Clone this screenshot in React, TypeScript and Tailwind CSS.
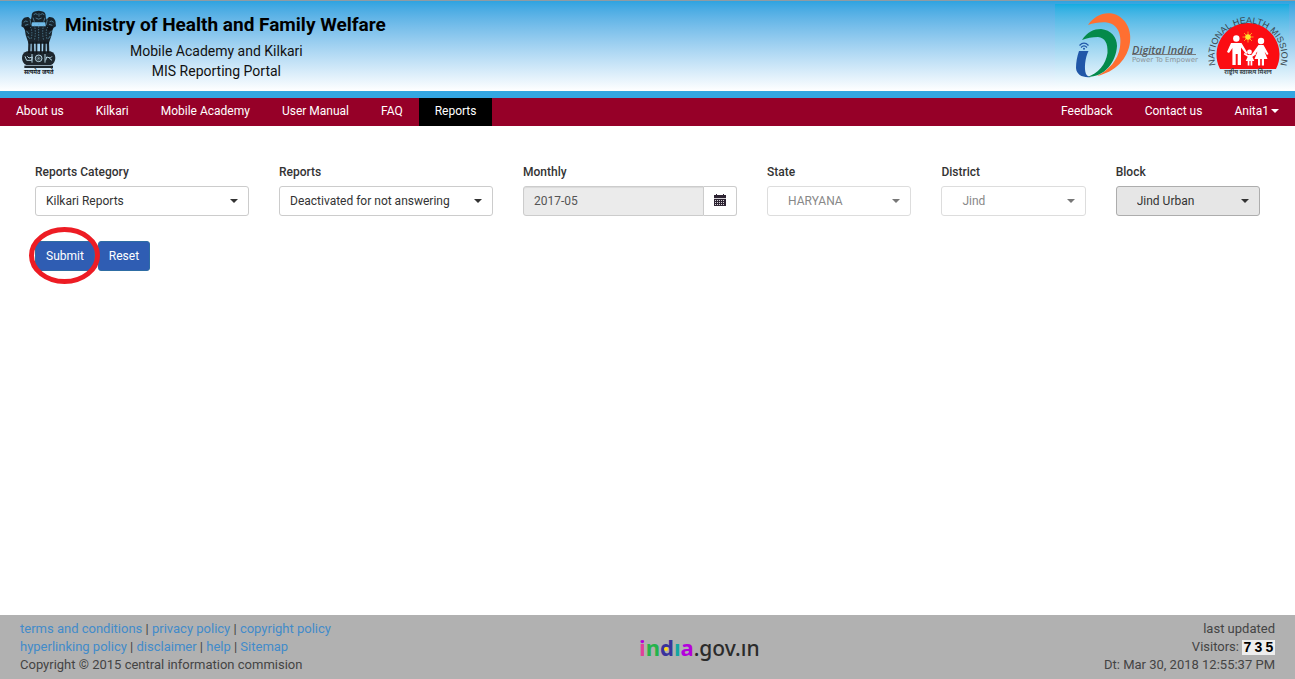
import React from 'react';

const ROBOTO = "font-['Roboto','Liberation_Sans',sans-serif]";

function Caret({ className = '' }: { className?: string }) {
  return (
    <svg aria-hidden="true" viewBox="0 0 8 4" className={`h-1 w-2 fill-current ${className}`}>
      <path d="M0 0h8L4 4z" />
    </svg>
  );
}

function Emblem() {
  return (
    <svg viewBox="0 0 150 225" className="h-[75px] w-[50px] shrink-0" aria-hidden="true">
      <g fill="#10171c" fillOpacity="0.92">
        <path d="M50 34C49 26 54 20 62 19q9-3 18 0c8 1 13 7 12 15l4 18H46z" />
        <path d="M20 56c-1-12 7-21 20-20l12 12-4 26-16 4-6-10-7-4z" />
        <path d="M122 56c1-12-7-21-20-20L90 48l4 26 16 4 6-10 7-4z" />
        <path d="M28 64h86l-4 26-9 26H41l-9-26z" />
        <path d="M40 110h7l-1 34h-7zM50 110h7l1 36h-8zM62 110h5v36h-5zM75 110h5v36h-5zM85 110h7v36h-8zM95 110h7l1 34h-7z" />
        <path d="M36 139h70c10 3 15 10 15 20s-5 18-13 21H34c-8-3-13-11-13-21s5-17 15-20z" />
        <path d="M28 182h86v7H28z" />
      </g>
      <g fill="none" stroke="#63a0be" strokeWidth="2">
        <path d="M56 29q6-6 12 0M76 29q6-6 12 0M62 39q9 7 18 0M54 38l4 12M90 38l-4 12M72 25v10" />
        <path d="M26 52q6-7 12-2M30 61l10-3M116 52q-6-7-12-2M112 61l-10-3M45 44l4 16M97 44l-4 16" />
        <path d="M46 66q8 14 2 36M58 60q6 22 0 46M71 56v50M86 60q-6 22 0 46M98 66q-8 14-2 36" strokeDasharray="4 4" />
        <path d="M34 77l8 10M110 77l-8 10M38 93l6 8M106 93l-6 8" />
      </g>
      <g fill="none" stroke="#b6d4e2" strokeWidth="3">
        <circle cx="71" cy="160" r="10" />
        <path d="M71 151v18M62 160h18M65 154l12 12M77 154l-12 12" strokeWidth="1" />
        <path d="M30 154l5 12h15l2-10-10 3-5-5M92 166l3-10 11 3 5-5M103 160l8 6M51 147v26M90 147v26" />
      </g>
      <text x="71" y="207" textAnchor="middle" fontSize="17" fontWeight="700" fill="#10171c" fontFamily="'Noto Sans','Noto Sans Devanagari','Lohit Devanagari',sans-serif">
        सत्यमेव जयते
      </text>
    </svg>
  );
}

function PartnerLogos() {
  return (
    <svg viewBox="0 0 234 87" className="h-[87px] w-[234px]" role="img" aria-label="Digital India and National Health Mission">
      <path fill="#ff6f31" d="M33 21C39 12 48 8 57 9.500C69 12 77 24 75 38C73 55 60 68 42 72C54 66 63 56 65 43C67 31 63 20 52 18.500C45 18 39 19 33 21Z" />
      <path fill="#048a4b" d="M27 36C32 28 39 25 46 25C56 26 62 33 62 42C61 58 50 73 32 73C43 70 51 60 52.500 49C53 39 50 34 43 33C37 33 32 34 27 36Z" />
      <path fill="#2157a8" d="M24 47H33.500C30 54 29 65 31 70C32 72 34 73 36 73C28 74 21.500 71 21 64C21 58 22 53 24 47Z" />
      <path fill="none" stroke="#2157a8" strokeWidth="1.200" d="M24.500 41.500Q29 37 33.500 41.500M26 43.500Q29 40.500 32 43.500" />
      <circle cx="29" cy="44.800" r="1" fill="#2157a8" />
      <text x="77" y="50" fontSize="11" fontStyle="italic" fontWeight="600" fill="#56595c" fontFamily="'Open Sans','Noto Sans',sans-serif">
        Digital India
      </text>
      <path d="M77 50.500H141" stroke="#77797b" strokeWidth="1" />
      <text x="77" y="58" fontSize="7" fill="#8e9498" fontFamily="'DejaVu Sans',sans-serif">
        Power To Empower
      </text>

      <path id="nhm-arc" d="M162.500 66A33.500 33 0 1 1 223.500 66" fill="none" />
      <path fill="#fb0d12" d="M165 65A31.500 31.500 0 1 1 221 65Z" />
      <text fontSize="9" fill="#39464d" fontFamily="'Liberation Sans',sans-serif">
        <textPath href="#nhm-arc" startOffset="50%" textAnchor="middle">
          NATIONAL HEALTH MISSION
        </textPath>
      </text>
      <path stroke="#ff9a1f" strokeWidth="1" d="M193 27.500v11M187.500 33h11M189 29l8 8M197 29l-8 8" />
      <circle cx="193" cy="33" r="2.800" fill="#ffe52e" />
      <g fill="#fff">
        <circle cx="181.300" cy="34.500" r="3.200" />
        <path d="M176 39h10.500l6 10-1.500 1-5-6.500V61h-3.300V50h-2V61h-3.300V44l-3.400 5-2-1z" />
        <circle cx="206" cy="37" r="3.200" />
        <path d="M203.500 41h5l5 9-1.500 1-2.500-3.500 3 7.500h-3.500v6.500h-2.200V55h-1.600v6.500h-2.200V55h-3.500l3-7.500-5 5-1.500-1z" />
        <circle cx="194.500" cy="48" r="2.400" />
        <path d="M193 51h3.500l4-2 .8 1.200-4 2.500 2 4.300h-2v4.500h-1.700V57h-1.200v4.500h-1.700V57h-2l2-4.300-4-2.500.8-1.200z" />
      </g>
      <text x="193" y="70" textAnchor="middle" fontSize="6" fontWeight="700" fill="#39464d" fontFamily="'Noto Sans','Noto Sans Devanagari','Lohit Devanagari',sans-serif">
        राष्ट्रीय स्वास्थ्य मिशन
      </text>
    </svg>
  );
}

function CalendarIcon() {
  return (
    <svg viewBox="0 0 12 12" className="h-3 w-3" aria-hidden="true">
      <path fill="#2e2433" d="M0 1h2V0h1v1h6V0h1v1h2v11H0z" />
      <path fill="#fff" d="M0 4h12v1H0zM1 6h1v1H1zM3 6h1v1H3zM5 6h1v1H5zM7 6h1v1H7zM9 6h1v1H9zM1 8h1v1H1zM3 8h1v1H3zM5 8h1v1H5zM7 8h1v1H7zM9 8h1v1H9zM1 10h1v1H1zM3 10h1v1H3zM5 10h1v1H5zM7 10h1v1H7zM9 10h1v1H9z" fillOpacity="0.8" />
    </svg>
  );
}

const LABEL = 'mb-[5px] block h-[18px] text-xs leading-[18px] font-medium text-[#333]';

type SelectFieldProps = { id: string; label: string; value: string; tone: string; disabled?: boolean };

function SelectField({ id, label, value, tone, disabled }: SelectFieldProps) {
  return (
    <div className="min-w-0 px-[15px]">
      <label htmlFor={id} className={LABEL}>{label}</label>
      <div className="relative">
        <select
          id={id}
          disabled={disabled}
          className={`block h-[30px] w-full appearance-none rounded-[3px] border pr-6 text-xs opacity-100 ${tone}`}
        >
          <option>{value}</option>
        </select>
        <Caret className={`pointer-events-none absolute top-[13px] right-[11px] ${disabled ? 'text-[#777]' : 'text-[#333]'}`} />
      </div>
    </div>
  );
}

function NavLink({ children, active }: { children: React.ReactNode; active?: boolean }) {
  return (
    <a href="#" className={`flex h-7 items-center gap-0.5 px-4 pb-0.5 ${active ? 'bg-black' : ''}`}>
      {children}
    </a>
  );
}

function FooterLink({ children }: { children: React.ReactNode }) {
  return <a href="#" className="text-[#428bca]">{children}</a>;
}

export default function App() {
  return (
    <div className={`flex min-h-screen flex-col bg-white text-[#333] ${ROBOTO}`}>
      <header className="flex items-start justify-between border-t border-[#8f9ba3] bg-linear-to-b from-[#2ea3e0] to-white pr-1.5 pl-[15px]">
        <div className="flex items-start pt-1 text-black">
          <Emblem />
          <div className="pt-1.5 text-center">
            <h1 className="text-[19px] leading-7 font-bold">Ministry of Health and Family Welfare</h1>
            <div className="pt-0.5 pr-[18px] text-sm leading-5 text-[#111]">
              <p>Mobile Academy and Kilkari</p>
              <p>MIS Reporting Portal</p>
            </div>
          </div>
        </div>
        <div className="mt-[3px] bg-linear-to-b from-[#10ace1] to-white">
          <PartnerLogos />
        </div>
      </header>

      <nav className="flex justify-between border-t-[7px] border-[#33a6e2] bg-[#960028] text-xs text-white">
        <div className="flex">
          <NavLink>About us</NavLink>
          <NavLink>Kilkari</NavLink>
          <NavLink>Mobile Academy</NavLink>
          <NavLink>User Manual</NavLink>
          <NavLink>FAQ</NavLink>
          <NavLink active>Reports</NavLink>
        </div>
        <div className="flex">
          <NavLink>Feedback</NavLink>
          <NavLink>Contact us</NavLink>
          <NavLink>Anita1<Caret /></NavLink>
        </div>
      </nav>

      <main className="flex-1 px-5 pt-[37px]">
        <form onSubmit={(e) => e.preventDefault()}>
          <div className="grid grid-cols-[7fr_7fr_7fr_5fr_5fr_5fr]">
            <SelectField id="category" label="Reports Category" value="Kilkari Reports" tone="border-[#ccc] bg-white pl-2.5 text-[#333]" />
            <SelectField id="report" label="Reports" value="Deactivated for not answering" tone="border-[#ccc] bg-white pl-2.5 text-[#333]" />
            <div className="min-w-0 px-[15px]">
              <label htmlFor="month" className={LABEL}>Monthly</label>
              <div className="flex h-[30px]">
                <input
                  id="month"
                  readOnly
                  value="2017-05"
                  className="w-full min-w-0 flex-1 rounded-l-[3px] border border-[#ccc] bg-[#ebebeb] px-2.5 text-xs text-[#555] shadow-[inset_0_1px_1px_rgba(0,0,0,0.075)]"
                />
                <button
                  type="button"
                  aria-label="Choose month"
                  className="flex w-[33px] items-center justify-center rounded-r-[3px] border border-l-0 border-[#ccc] bg-white pb-0.5"
                >
                  <CalendarIcon />
                </button>
              </div>
            </div>
            <SelectField id="state" label="State" value="HARYANA" disabled tone="border-[#ddd] bg-white pl-5 text-[#888]" />
            <SelectField id="district" label="District" value="Jind" disabled tone="border-[#ddd] bg-white pl-5 text-[#888]" />
            <SelectField id="block" label="Block" value="Jind Urban" tone="border-[#adadad] bg-[#e6e6e6] pl-5 text-[#333]" />
          </div>

          <div className="flex gap-[3px] px-[15px] pt-[25px] text-xs text-white">
            <div className="relative">
              <button type="submit" className="h-[30px] rounded-[3px] border border-[#2e6da4] bg-[#2f5db3] px-2.5">Submit</button>
              <svg viewBox="0 0 72 58" aria-hidden="true" className="pointer-events-none absolute -top-3.5 -left-1.5 h-[58px] w-[72px]">
                <ellipse cx="35.500" cy="28.500" rx="33" ry="26" fill="none" stroke="#ed1c24" strokeWidth="5" />
              </svg>
            </div>
            <button type="reset" className="h-[30px] rounded-[3px] border border-[#2e6da4] bg-[#2f5db3] px-2.5">Reset</button>
          </div>
        </form>
      </main>

      <footer className="grid grid-cols-[6fr_120px_5fr] items-start bg-[#b1b1b1] px-5 pt-[5px] pb-[5px] text-[13px] leading-[18px] text-[#444]">
        <div>
          <p><FooterLink>terms and conditions</FooterLink> | <FooterLink>privacy policy</FooterLink> | <FooterLink>copyright policy</FooterLink></p>
          <p><FooterLink>hyperlinking policy</FooterLink> | <FooterLink>disclaimer</FooterLink> | <FooterLink>help</FooterLink> | <FooterLink>Sitemap</FooterLink></p>
          <p>Copyright © 2015 central information commision</p>
        </div>
        <a href="#" className="flex items-baseline pt-3 font-['Noto_Sans','Open_Sans',sans-serif] text-[21px] leading-[30px] whitespace-nowrap text-[#2b2b2b]">
          <span className="flex text-[22px] font-bold">
            <span className="bg-linear-to-b from-[#b400dc] from-40% to-[#e0409a] to-40% bg-clip-text text-transparent">i</span>
            <span className="text-[#25b34b]">n</span>
            <span className="relative text-[#39339b]">
              d
              <span className="absolute top-[15px] left-1 size-1 rounded-full bg-[#ffd91a]" />
            </span>
            <span className="text-[#13a6a0]">ı</span>
            <span className="text-[#b400dc]">a</span>
          </span>
          <span className="font-medium">.gov.ın</span>
        </a>
        <div className="text-right">
          <p>last updated</p>
          <p className="flex items-center justify-end gap-[3px]">
            Visitors:
            <span className="flex font-['Liberation_Sans',sans-serif] text-sm leading-[15px] font-bold text-black">
              <span className="w-[11px] bg-[#eee] text-center">7</span>
              <span className="w-[11px] bg-[#eee] text-center">3</span>
              <span className="w-[11px] bg-[#eee] text-center">5</span>
            </span>
          </p>
          <p>Dt: Mar 30, 2018 12:55:37 PM</p>
        </div>
      </footer>
    </div>
  );
}
